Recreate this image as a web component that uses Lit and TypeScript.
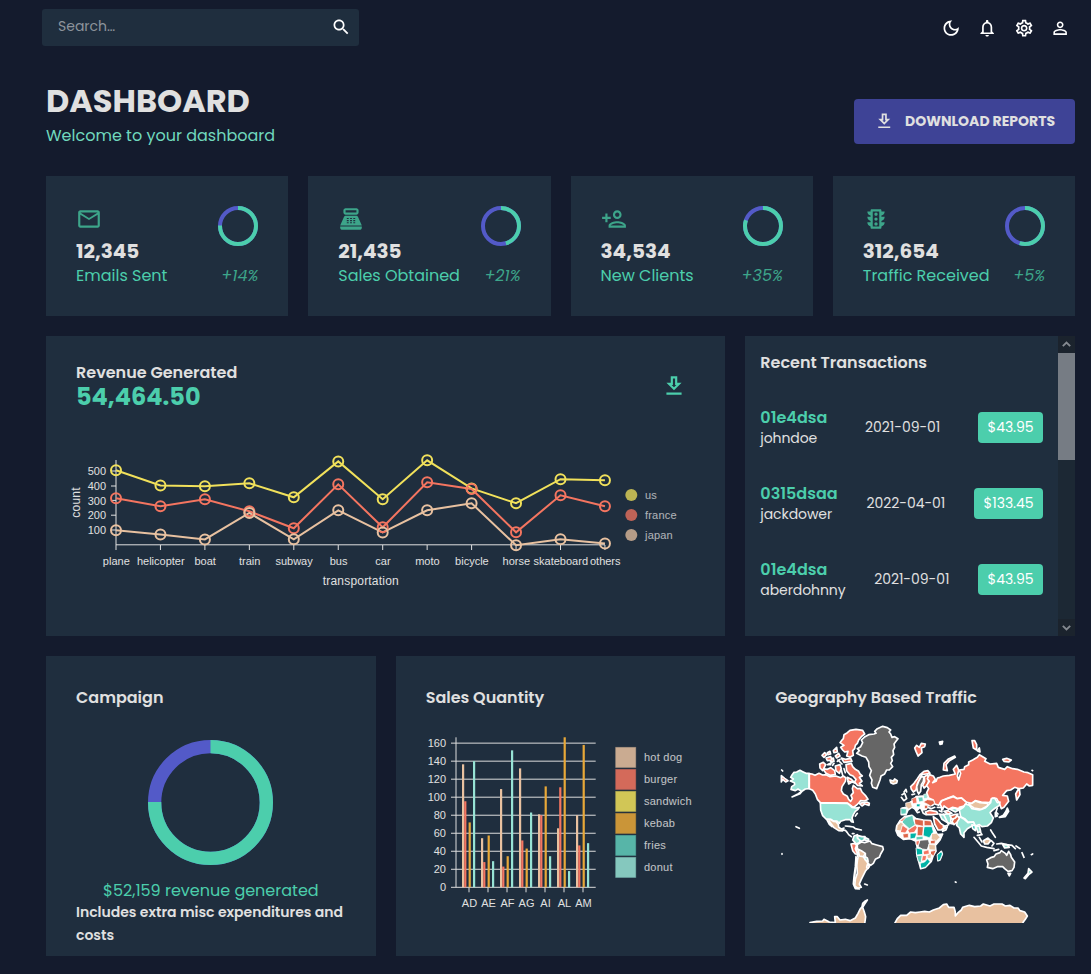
import { LitElement, html, svg, css } from "lit";
import { customElement, property } from "lit/decorators.js";

const ICONS: Record<string, string> = {
  search: "M15.5 14h-.79l-.28-.27C15.41 12.59 16 11.11 16 9.5 16 5.91 13.09 3 9.5 3S3 5.91 3 9.5 5.91 16 9.5 16c1.61 0 3.09-.59 4.23-1.57l.27.28v.79l5 4.99L20.49 19l-4.99-5zm-6 0C7.01 14 5 11.99 5 9.5S7.01 5 9.5 5 14 7.01 14 9.5 11.99 14 9.5 14z",
  moon: "M9.37 5.51c-.18.64-.27 1.31-.27 1.99 0 4.08 3.32 7.4 7.4 7.4.68 0 1.35-.09 1.99-.27C17.45 17.19 14.93 19 12 19c-3.86 0-7-3.14-7-7 0-2.93 1.81-5.45 4.37-6.49zM12 3c-4.97 0-9 4.03-9 9s4.03 9 9 9 9-4.03 9-9c0-.46-.04-.92-.1-1.36-.98 1.37-2.58 2.26-4.4 2.26-2.98 0-5.4-2.42-5.4-5.4 0-1.81.89-3.42 2.26-4.4-.44-.06-.9-.1-1.36-.1z",
  bell: "M12 22c1.1 0 2-.9 2-2h-4c0 1.1.9 2 2 2zm6-6v-5c0-3.07-1.63-5.64-4.5-6.32V4c0-.83-.67-1.5-1.5-1.5s-1.5.67-1.5 1.5v.68C7.64 5.36 6 7.92 6 11v5l-2 2v1h16v-1l-2-2zm-2 1H8v-6c0-2.48 1.51-4.5 4-4.5s4 2.02 4 4.5v6z",
  gear: "M19.43 12.98c.04-.32.07-.64.07-.98 0-.34-.03-.66-.07-.98l2.11-1.65c.19-.15.24-.42.12-.64l-2-3.46c-.09-.16-.26-.25-.44-.25-.06 0-.12.01-.17.03l-2.49 1c-.52-.4-1.08-.73-1.69-.98l-.38-2.65C14.46 2.18 14.25 2 14 2h-4c-.25 0-.46.18-.49.42l-.38 2.65c-.61.25-1.17.59-1.69.98l-2.49-1c-.06-.02-.12-.03-.18-.03-.17 0-.34.09-.43.25l-2 3.46c-.13.22-.07.49.12.64l2.11 1.65c-.04.32-.07.65-.07.98 0 .33.03.66.07.98l-2.11 1.65c-.19.15-.24.42-.12.64l2 3.46c.09.16.26.25.44.25.06 0 .12-.01.17-.03l2.49-1c.52.4 1.08.73 1.69.98l.38 2.65c.03.24.24.42.49.42h4c.25 0 .46-.18.49-.42l.38-2.65c.61-.25 1.17-.59 1.69-.98l2.49 1c.06.02.12.03.18.03.17 0 .34-.09.43-.25l2-3.46c.12-.22.07-.49-.12-.64l-2.11-1.65zm-1.98-1.71c.04.31.05.52.05.73 0 .21-.02.43-.05.73l-.14 1.13.89.7 1.08.84-.7 1.21-1.27-.51-1.04-.42-.9.68c-.43.32-.84.56-1.25.73l-1.06.43-.16 1.13-.2 1.35h-1.4l-.19-1.35-.16-1.13-1.06-.43c-.43-.18-.83-.41-1.23-.71l-.91-.7-1.06.43-1.27.51-.7-1.21 1.08-.84.89-.7-.14-1.13c-.03-.31-.05-.54-.05-.74s.02-.43.05-.73l.14-1.13-.89-.7-1.08-.84.7-1.21 1.27.51 1.04.42.9-.68c.43-.32.84-.56 1.25-.73l1.06-.43.16-1.13.2-1.35h1.39l.19 1.35.16 1.13 1.06.43c.43.18.83.41 1.23.71l.91.7 1.06-.43 1.27-.51.7 1.21-1.07.85-.89.7.14 1.13zM12 8c-2.21 0-4 1.79-4 4s1.79 4 4 4 4-1.79 4-4-1.79-4-4-4zm0 6c-1.1 0-2-.9-2-2s.9-2 2-2 2 .9 2 2-.9 2-2 2z",
  person: "M12 5.9c1.16 0 2.1.94 2.1 2.1s-.94 2.1-2.1 2.1S9.9 9.16 9.9 8s.94-2.1 2.1-2.1m0 9c2.97 0 6.1 1.46 6.1 2.1v1.1H5.9V17c0-.64 3.13-2.1 6.1-2.1M12 4C9.79 4 8 5.79 8 8s1.79 4 4 4 4-1.79 4-4-1.79-4-4-4zm0 9c-2.67 0-8 1.34-8 4v3h16v-3c0-2.66-5.33-4-8-4z",
  download: "M19 9h-4V3H9v6H5l7 7 7-7zm-8 2V5h2v6h1.17L12 13.17 9.83 11H11zm-6 7h14v2H5z",
  email: "M22 6c0-1.1-.9-2-2-2H4c-1.1 0-2 .9-2 2v12c0 1.1.9 2 2 2h16c1.1 0 2-.9 2-2V6zm-2 0-8 5-8-5h16zm0 12H4V8l8 5 8-5v10z",
  sale: "M17 2H7c-1.1 0-2 .9-2 2v2c0 1.1.9 2 2 2h10c1.1 0 2-.9 2-2V4c0-1.1-.9-2-2-2zm0 4H7V4h10v2zm3 16H4c-1.1 0-2-.9-2-2v-1h20v1c0 1.1-.9 2-2 2zm-1.47-11.81C18.21 9.47 17.49 9 16.7 9H7.3c-.79 0-1.51.47-1.83 1.19L2 18h20l-3.47-7.81zM9.5 16h-1c-.28 0-.5-.22-.5-.5s.22-.5.5-.5h1c.28 0 .5.22.5.5s-.22.5-.5.5zm0-2h-1c-.28 0-.5-.22-.5-.5s.22-.5.5-.5h1c.28 0 .5.22.5.5s-.22.5-.5.5zm0-2h-1c-.28 0-.5-.22-.5-.5s.22-.5.5-.5h1c.28 0 .5.22.5.5s-.22.5-.5.5zm3 4h-1c-.28 0-.5-.22-.5-.5s.22-.5.5-.5h1c.28 0 .5.22.5.5s-.22.5-.5.5zm0-2h-1c-.28 0-.5-.22-.5-.5s.22-.5.5-.5h1c.28 0 .5.22.5.5s-.22.5-.5.5zm0-2h-1c-.28 0-.5-.22-.5-.5s.22-.5.5-.5h1c.28 0 .5.22.5.5s-.22.5-.5.5zm3 4h-1c-.28 0-.5-.22-.5-.5s.22-.5.5-.5h1c.28 0 .5.22.5.5s-.22.5-.5.5zm0-2h-1c-.28 0-.5-.22-.5-.5s.22-.5.5-.5h1c.28 0 .5.22.5.5s-.22.5-.5.5zm0-2h-1c-.28 0-.5-.22-.5-.5s.22-.5.5-.5h1c.28 0 .5.22.5.5s-.22.5-.5.5z",
  addPerson: "M15 12c2.21 0 4-1.79 4-4s-1.79-4-4-4-4 1.79-4 4 1.79 4 4 4zm0-6c1.1 0 2 .9 2 2s-.9 2-2 2-2-.9-2-2 .9-2 2-2zm0 8c-2.67 0-8 1.34-8 4v2h16v-2c0-2.66-5.33-4-8-4zm-6 4c.22-.72 3.31-2 6-2 2.7 0 5.8 1.29 6 2H9zm-3-3v-3h3v-2H6V7H4v3H1v2h3v3z",
  traffic: "M20 10h-3V8.86c1.72-.45 3-2 3-3.86h-3V4c0-.55-.45-1-1-1H8c-.55 0-1 .45-1 1v1H4c0 1.86 1.28 3.41 3 3.86V10H4c0 1.86 1.28 3.41 3 3.86V15H4c0 1.86 1.28 3.41 3 3.86V20c0 .55.45 1 1 1h8c.55 0 1-.45 1-1v-1.14c1.72-.45 3-2 3-3.86h-3v-1.14c1.72-.45 3-2 3-3.86zm-5 9H9V5h6v14zm-3-1c.83 0 1.5-.67 1.5-1.5S12.83 15 12 15s-1.5.67-1.5 1.5.67 1.5 1.5 1.5zm0-4.5c.83 0 1.5-.67 1.5-1.5s-.67-1.5-1.5-1.5-1.5.67-1.5 1.5.67 1.5 1.5 1.5zm0-4.5c.83 0 1.5-.67 1.5-1.5S12.83 6 12 6s-1.5.67-1.5 1.5S11.17 9 12 9z",
};

const icon = (name: string, size: number) =>
  html`<svg width=${size} height=${size} viewBox="0 0 24 24" fill="currentColor"><path d=${ICONS[name]}></path></svg>`;

@customElement("progress-ring")
class ProgressRing extends LitElement {
  @property({ type: Number }) size = 40;
  @property({ type: Number }) progress = 0.75;
  @property({ type: Number }) thickness = 4;
  static styles = css`
    :host { display: block; }
    svg { display: block; }
  `;
  render() {
    const r = (this.size - this.thickness) / 2;
    const c = this.size / 2;
    const len = 2 * Math.PI * r;
    return html`<svg width=${this.size} height=${this.size} fill="none" stroke-width=${this.thickness}>
      <circle cx=${c} cy=${c} r=${r} stroke="#535ac8"></circle>
      <circle cx=${c} cy=${c} r=${r} stroke="#4cceac" stroke-dasharray="${len * this.progress} ${len}" transform="rotate(-90 ${c} ${c})"></circle>
    </svg>`;
  }
}

const MODES = ["plane", "helicopter", "boat", "train", "subway", "bus", "car", "moto", "bicycle", "horse", "skateboard", "others"];
const LINES = [
  { id: "us", color: "#f1e15b", ys: [470.3, 485.4, 486.3, 483.3, 497.3, 461.4, 499.2, 460.3, 488.4, 503.2, 479.2, 480.3] },
  { id: "france", color: "#f47560", ys: [498.3, 506.3, 499.2, 511.3, 528.3, 484.3, 527.3, 482.3, 489, 532.3, 495.3, 506.2] },
  { id: "japan", color: "#e8c1a0", ys: [530.3, 534.4, 539.4, 513, 539.3, 510.3, 532.4, 510.3, 503.3, 545.3, 539.2, 543.4] },
];

@customElement("line-chart")
class LineChart extends LitElement {
  static styles = css`
    :host { display: block; }
    svg { display: block; font-family: "Liberation Sans", Arial, sans-serif; font-size: 11px; }
    .title { font-size: 12px; letter-spacing: 0.2px; }
    .legend { letter-spacing: 0.2px; }
    .axis { stroke: #e0e0e0; stroke-width: 1; }
  `;
  render() {
    const x = (i: number) => 116 + i * 44.45;
    return html`<svg width="679" height="200" viewBox="46 436 679 200">
      <g class="axis">
        <line x1="116" x2="116" y1="460" y2="545"></line>
        <line x1="116" x2="605" y1="544.8" y2="544.8"></line>
        ${MODES.map((_, i) => svg`<line x1=${x(i)} x2=${x(i)} y1="545" y2="550"></line>`)}
        ${[471, 486, 500.4, 515.2, 530].map((y) => svg`<line x1="111" x2="116" y1=${y} y2=${y}></line>`)}
      </g>
      <g fill="#e0e0e0">
        ${MODES.map((m, i) => svg`<text x=${x(i) + 0.3} y="565" text-anchor="middle">${m}</text>`)}
        ${[500, 400, 300, 200, 100].map((v, i) => svg`<text x="106" y=${475 + i * 14.8} text-anchor="end">${v}</text>`)}
        <text class="title" x="360.8" y="585" text-anchor="middle">transportation</text>
        <text class="title" transform="translate(79.5 502.5) rotate(-90)" text-anchor="middle">count</text>
      </g>
      ${LINES.map((l) => svg`<polyline fill="none" stroke=${l.color} stroke-width="2" points=${l.ys.map((y, i) => `${x(i)},${y}`).join(" ")}></polyline>`)}
      ${LINES.map((l) => l.ys.map((y, i) => svg`<circle cx=${x(i)} cy=${y} r="5" fill="none" stroke=${l.color} stroke-width="2"></circle>`))}
      ${LINES.map((l, i) => svg`<g opacity="0.75"><circle cx="631.3" cy=${495 + i * 20} r="6" fill=${l.color}></circle><text class="legend" x="645" y=${499 + i * 20} fill="#e0e0e0">${l.id}</text></g>`)}
    </svg>`;
  }
}

const FOODS = [
  ["hot dog", "#e8c1a0"], ["burger", "#f47560"], ["sandwich", "#f1e15b"],
  ["kebab", "#e8a838"], ["fries", "#61cdbb"], ["donut", "#97e3d5"],
];
const SALES: [string, number[]][] = [
  ["AD", [136.5, 95.5, 0, 72, 0, 140]],
  ["AE", [54.5, 28, 0, 57.5, 0, 29]],
  ["AF", [109, 23, 0, 34.5, 0, 152]],
  ["AG", [132, 52, 0, 43, 0, 83]],
  ["AI", [81, 80, 0, 112, 0, 34.5]],
  ["AL", [65.5, 111, 0, 166.5, 0, 18]],
  ["AM", [80, 46.5, 0, 158, 0, 49]],
];

@customElement("bar-chart")
class BarChart extends LitElement {
  static styles = css`
    :host { display: block; }
    svg { display: block; font-family: "Liberation Sans", Arial, sans-serif; font-size: 11px; }
    .legend { letter-spacing: 0.25px; }
  `;
  render() {
    const y = (v: number) => 887.3 - v * 0.901;
    const ticks = [0, 20, 40, 60, 80, 100, 120, 140, 160];
    return html`<svg width="329" height="230" viewBox="396 726 329 230">
      <g stroke="#dddddd" stroke-width="1">
        ${ticks.map((t) => svg`<line x1="451" x2="595.7" y1=${y(t)} y2=${y(t)}></line>`)}
        <line x1="456" x2="456" y1="737.3" y2="887.3"></line>
        ${SALES.map((_, i) => svg`<line x1=${469 + i * 19} x2=${469 + i * 19} y1="887.3" y2="892.3"></line>`)}
      </g>
      ${SALES.map(([, vs], g) => vs.map((v, i) => v ? svg`<rect x=${462 + g * 19 + i * 2.2} y=${y(v)} width="2.2" height=${v * 0.901} fill=${FOODS[i][1]}></rect>` : null))}
      <g fill="#e0e0e0">
        ${ticks.map((t) => svg`<text x="446" y=${y(t) + 4} text-anchor="end">${t}</text>`)}
        ${SALES.map(([n], i) => svg`<text x=${469.5 + i * 19} y="907" text-anchor="middle">${n}</text>`)}
      </g>
      ${FOODS.map(([n, c], i) => svg`<g opacity="0.85"><rect x="615.7" y=${747.4 + i * 22} width="20" height="20" fill=${c} stroke=${c} stroke-opacity="0.5" stroke-width="1"></rect><text class="legend" x="644" y=${761 + i * 22} fill="#e0e0e0">${n}</text></g>`)}
    </svg>`;
  }
}

const CORAL = "#f47560", MINT = "#97e3d5", SAND = "#e8c1a0", GREY = "#666666", JADE = "#61cdbb", TEAL = "#00b3a6", RUST = "#dd6549";

/* Left half of the map: the Americas and Greenland. */
const WEST: [string, string][] = [
  [MINT, "M117 160L108 160 98 155 90 151 80 156 72 157 66 165 62 172 70 177 61 183 73 188 74 194 65 200 63 208 76 212 84 207 95 214 82 223 66 231 90 221 97 213 106 207 117 206Z"],
  [CORAL, "M34 167L44 175 54 182 47 186 38 178 34 186Z"],
  [CORAL, "M118 161L126 162 135 166 147 160 158 165 168 164 180 170 198 168 212 173 220 168 228 174 226 184 216 200 214 212 220 222 232 229 236 238 242 244 247 236 243 226 250 218 247 206 250 196 262 206 271 205 276 216 286 226 294 238 284 243 272 242 266 249 260 255 250 263 242 256 232 249 151 248 142 238 136 222 128 211 118 206Z"],
  [CORAL, "M268 250L280 248 290 246 298 250 297 256 284 252 276 258Z"],
  [MINT, "M151 249L232 250 240 256 246 262 258 264 268 262 264 268 256 274 250 284 246 294 250 307 244 305 240 299 226 299 212 304 208 310 200 303 190 303 182 298 168 297 158 287 152 270Z"],
  [SAND, "M170 298L182 299 190 304 198 305 205 313 206 322 214 327 222 324 218 333 206 332 192 323 184 312 178 304 180 312 186 320 178 313Z"],
  [GREY, "M285 50L296 44 312 42 318 40 314 34 322 26 338 19 352 23 362 30 357 36 362 42 366 52 374 50 384 56 378 64 372 72 374 82 369 92 371 104 364 112 367 122 362 130 368 140 358 150 350 150 344 162 333 168 330 180 326 190 320 206 308 202 304 190 306 180 299 166 304 152 297 140 296 126 288 112 276 108 260 100 268 92 262 86 272 80 278 68 274 60Z"],
  [CORAL, "M220 56L222 44 232 38 240 31 258 28 278 31 284 42 274 50 266 60 262 70 256 76 254 86 248 92 250 106 240 112 230 108 234 94 224 96 218 90 212 82 222 76 210 68 216 60Z"],
  [CORAL, "M214 114L226 118 242 115 246 124 222 127Z"],
  [CORAL, "M228 134L244 130 248 140 256 148 266 154 270 162 277 168 268 172 276 184 268 190 277 198 262 196 254 186 258 178 249 168 240 164 230 152Z"],
  [CORAL, "M232 172L244 178 256 190 246 186 236 192Z"],
  [CORAL, "M158 146L172 148 182 143 194 152 196 164 180 166 168 160Z"],
  [CORAL, "M149 132L160 127 167 134 158 152 150 144Z"],
  [CORAL, "M196 138L210 134 214 146 208 160 198 152Z"],
  [CORAL, "M180 118L190 114 192 124 182 126Z"],
  [CORAL, "M156 106L164 98 170 104 162 112Z"],
  [CORAL, "M172 98L180 94 182 102 174 104Z"],
  [CORAL, "M190 92L200 82 202 96 192 98Z"],
  [CORAL, "M168 114L182 110 186 120 172 122Z"],
  [CORAL, "M196 108L206 100 210 108 200 114Z"],
  [SAND, "M360 180L370 183 374 177 382 182 380 189 370 192 362 188Z"],
  [SAND, "M262 372L258 390 264 412 260 432 262 460 256 478 254 498 264 505 274 502 268 492 274 478 280 466 286 454 292 446 298 438 292 428 284 416 276 404Z"],
  [MINT, "M258 410L262 424 256 450 254 474 251 490 256 502 268 507 256 506 250 492 252 470 256 440Z"],
  [MINT, "M252 348L262 344 262 354 272 360 268 368 258 372 252 364 248 360Z"],
  [JADE, "M262 346L276 350 285 350 282 360 274 364 264 356Z"],
  [MINT, "M284 352L296 358 294 364 284 360Z"],
  [CORAL, "M243 372L254 370 260 376 256 386 260 396 268 402 256 402 248 392Z"],
  [SAND, "M264 388L276 392 286 400 280 410 268 408Z"],
  [GREY, "M262 374L274 366 284 368 300 363 306 371 320 375 338 380 340 388 332 402 328 412 316 418 310 430 302 436 294 430 292 416 286 410 286 400 274 392 262 386Z"],
  [JADE, "M282 410L292 414 294 424 286 420Z"],
  [CORAL, "M292 434L298 440 294 446 290 442Z"],
  [SAND, "M120 608L140 604 158 603 162 598 178 606 196 608 194 590 202 590 210 600 226 598 240 602 256 594 264 580 270 568 276 560 278 550 286 543 292 540 284 552 278 562 283 576 287 590 284 612 120 612Z"],
];

/* Right half: Eurasia, Oceania, East Antarctica and the coasts under Africa and Europe. */
const EAST: [string, string][] = [
  ["#ffffff", "M20 318L30 302 44 290 66 286 78 296 100 300 122 302 130 320 142 344 158 342 150 360 136 376 138 394 130 406 124 424 106 442 92 446 86 424 80 400 82 384 78 364 62 356 40 358 24 346 18 332Z"],
  ["#ffffff", "M36 264L50 262 62 246 72 240 78 230 98 228 120 236 134 246 128 256 112 258 108 268 98 270 90 262 80 272 70 258 54 270 48 284 34 284Z"],
  [CORAL, "M64 208L62 200 72 190 82 176 90 164 102 154 114 152 120 160 108 162 96 164 90 176 82 192 78 210 70 216Z"],
  [GREY, "M82 214L80 200 86 184 94 170 102 171 100 184 94 194 93 204 92 214 86 222Z"],
  [RUST, "M103 170L113 164 116 180 114 194 102 204 98 196 104 184Z"],
  [CORAL, "M118 164L130 168 136 178 128 188 138 184 142 174 150 172 160 168 178 166 196 162 190 148 200 136 206 150 202 168 206 180 212 160 208 150 222 148 224 140 236 134 236 126 248 120 262 112 268 104 288 116 284 124 300 132 320 130 325 142 344 148 352 140 368 146 382 148 402 156 414 158 428 164 428 196 418 198 410 192 400 204 388 206 390 224 380 240 377 222 386 206 374 202 362 210 350 212 338 226 352 228 356 244 342 262 334 266 328 250 320 236 308 234 298 248 274 246 256 242 244 250 228 246 214 234 202 236 190 228 174 234 154 242 146 256 134 252 130 240 116 234 110 218 116 206 110 196 118 184 112 176Z"],
  [CORAL, "M150 252L156 242 172 236 190 230 202 236 214 234 230 248 222 262 204 266 188 262 176 268 162 258 158 268Z"],
  [MINT, "M208 270L220 262 226 252 238 256 246 266 268 270 286 264 302 248 304 236 314 234 322 248 330 246 328 256 316 264 306 272 300 278 310 294 304 308 292 318 276 320 268 314 256 318 250 306 234 306 224 296 212 290Z"],
  [SAND, "M234 252L246 250 256 243 270 248 294 250 292 258 274 268 252 264Z"],
  [MINT, "M202 304L210 290 220 296 234 308 250 306 254 314 242 320 232 326 222 338 222 352 212 342 208 324 200 316Z"],
  [RUST, "M186 304L192 294 204 288 208 296 200 308 192 314Z"],
  [MINT, "M148 282L160 284 176 280 184 290 182 304 188 312 172 308 156 298Z"],
  [RUST, "M180 288L192 284 204 282 196 294 186 298Z"],
  [RUST, "M130 290L142 298 152 310 166 320 154 330 144 330 134 312Z"],
  [CORAL, "M162 274L174 272 186 280 174 282Z"],
  [MINT, "M180 268L194 264 206 270 196 276Z"],
  [CORAL, "M106 276L120 271 140 275 144 282 126 284 110 284Z"],
  [SAND, "M160 326L172 320 168 330 158 334Z"],
  [TEAL, "M246 314L256 318 256 332 248 326Z"],
  [MINT, "M258 320L268 318 272 334 264 338Z"],
  [CORAL, "M74 84L80 76 88 82 94 70 106 72 104 80 94 84 96 98 84 108 78 94Z"],
  [CORAL, "M160 150L162 130 174 118 194 108 196 112 178 122 168 134 172 152Z"],
  [CORAL, "M246 62L254 62 260 74 260 90 250 84Z"],
  [CORAL, "M262 92L268 84 270 96Z"],
  [CORAL, "M338 118L350 115 364 120 356 126 342 124Z"],
  ["#ffffff", "M148 66L158 64 156 72 150 73Z"],
  ["#ffffff", "M352 264L356 274 346 290 328 292 340 286 348 274Z"],
  [SAND, "M280 362L294 354 302 362 294 372 284 372Z"],
  [MINT, "M338 374L352 374 358 382 344 384Z"],
  [JADE, "M316 278L322 288 316 290Z"],
  [GREY, "M290 420L302 413 312 410 318 402 330 398 334 392 346 400 350 406 356 394 362 404 364 412 374 426 372 442 366 452 354 454 344 446 338 440 322 440 308 446 292 442 294 432Z"],
  [MINT, "M354 460L362 460 358 468Z"],
  [MINT, "M416 446L426 456 416 464 406 476 402 474 414 460Z"],
  [SAND, "M12 614L22 596 32 586 50 586 62 576 76 578 90 576 104 574 118 576 130 570 148 564 160 554 170 552 176 562 192 562 196 576 196 588 204 578 214 570 218 562 238 556 254 560 272 558 280 552 300 558 312 552 336 552 346 558 360 556 372 564 384 564 390 572 404 576 412 588 406 598 400 606 396 614Z"],
];

/* Small countries of Europe and Africa, laid over the white coasts. */
const INNER: [string, string][] = [
  [RUST, "M100 246L112 239 130 241 134 250 122 258 110 251Z"],
  [JADE, "M84 232L98 231 100 243 88 246Z"],
  [CORAL, "M66 236L79 231 81 249 69 251Z"],
  [SAND, "M48 249L63 246 67 261 56 267 48 260Z"],
  [JADE, "M33 265L50 267 48 281 34 283Z"],
  [MINT, "M102 223L110 221 113 234 102 236Z"],
  [RUST, "M104 256L113 256 113 265 104 266Z"],
  [TEAL, "M80 252L91 252 89 260 80 260Z"],
  [JADE, "M38 296L50 292 68 286 71 302 76 314 58 326 38 308Z"],
  [CORAL, "M29 303L46 290 46 294 38 303Z"],
  [SAND, "M20 330L22 316 32 307 40 311 38 333Z"],
  [CORAL, "M38 316L54 327 46 339 32 337Z"],
  [CORAL, "M54 330L76 316 82 323 73 337 58 339Z"],
  [RUST, "M74 297L100 301 100 319 76 314Z"],
  [RUST, "M83 320L100 320 98 347 82 347Z"],
  [RUST, "M103 301L123 303 126 317 103 317Z"],
  [TEAL, "M103 320L126 320 130 336 118 353 100 347Z"],
  [SAND, "M126 341L140 340 150 352 137 365 124 358Z"],
  [TEAL, "M61 340L80 339 76 354 61 357Z"],
  [RUST, "M39 342L55 340 55 353 41 354Z"],
  [JADE, "M79 350L99 349 99 358 79 360Z"],
  [CORAL, "M79 363L89 362 87 377 79 374Z"],
  [GREY, "M91 361L115 359 118 372 111 389 97 387 85 380Z"],
  [SAND, "M117 373L136 375 136 390 118 389Z"],
  [RUST, "M122 362L136 360 135 371 122 371Z"],
  [TEAL, "M79 384L97 388 98 403 81 405Z"],
  [CORAL, "M100 394L116 389 118 402 102 404Z"],
  [JADE, "M81 407L97 406 93 429 86 425Z"],
  [CORAL, "M98 407L110 407 107 421 96 423Z"],
  [SAND, "M112 405L124 400 123 415 113 415Z"],
  [RUST, "M122 394L138 391 131 408 123 403Z"],
  [TEAL, "M91 430L104 426 113 416 120 425 107 441 94 445Z"],
  [TEAL, "M142 404L154 395 157 402 150 420 144 422Z"],
];

const WEST_COAST = "M78 320L88 325M36 401v2M35 150l3 3M216 330L226 331 232 338 236 344 244 350M226 318L238 319 250 321 256 326 274 330M247 341h5M234 184L246 186M284 492L292 495M262 280L256 288M214 150L218 166M204 120L216 132M186 128L176 132M210 118L202 124M222 146L226 158M172 134L182 134M192 130L188 136";
const EAST_COAST = "M42 216L48 208 50 216M36 224L44 220 50 236 42 242M34 232L40 240M66 262L74 266 82 278 88 276M92 262L100 280 108 284M142 262L154 262 156 276 148 272M66 224L74 222M112 262L124 266 134 262M252 352L264 366 274 378 290 382 312 386M302 330L308 340 316 352M304 362L312 370 306 378M320 372L334 370 350 374 366 376 376 386M378 378L390 386M396 398L402 412M424 404L428 402M270 334L276 344 262 346M196 486l2 1M426 151l2 1M312 392L326 388M268 352L276 366M322 264L318 276 324 282M160 282L176 314 160 320M208 262L222 258M144 404L154 394 157 402 150 420 144 422Z";

@customElement("world-map")
class WorldMap extends LitElement {
  static styles = css`
    :host { display: block; }
    svg { display: block; margin-left: 24.67px; }
  `;
  render() {
    const land = (list: [string, string][]) => list.map(([f, d]) => svg`<path fill=${f} d=${d}></path>`);
    return html`<svg width="270" height="202.67" viewBox="0 0 810 608" stroke="#fff" stroke-width="5" stroke-linejoin="round" stroke-linecap="round">
      <g>${land(WEST)}<path fill="none" d=${WEST_COAST}></path></g>
      <g transform="translate(360 0)">${land(EAST)}<path fill="none" d=${EAST_COAST}></path><g stroke-width="2.2">${land(INNER)}</g></g>
    </svg>`;
  }
}

const STATS = [
  { icon: "email", value: "12,345", label: "Emails Sent", pct: "+14%", p: 0.75 },
  { icon: "sale", value: "21,435", label: "Sales Obtained", pct: "+21%", p: 0.453 },
  { icon: "addPerson", value: "34,534", label: "New Clients", pct: "+35%", p: 0.797 },
  { icon: "traffic", value: "312,654", label: "Traffic Received", pct: "+5%", p: 0.545 },
];
const TX = [
  { id: "01e4dsa", user: "johndoe", date: "2021-09-01", cost: "$43.95" },
  { id: "0315dsaa", user: "jackdower", date: "2022-04-01", cost: "$133.45" },
  { id: "01e4dsa", user: "aberdohnny", date: "2021-09-01", cost: "$43.95" },
];

@customElement("app-root")
class AppRoot extends LitElement {
  static styles = css`
    :host {
      display: block; box-sizing: border-box; height: 974px; overflow: hidden;
      background: #141b2d; color: #e0e0e0;
      font-family: Poppins, Inter, sans-serif; font-size: 14px; white-space: nowrap;
    }
    * { box-sizing: border-box; }
    svg { display: block; }
    .topbar { display: flex; justify-content: space-between; padding: 9px 20.5px 0 42px; height: 46px; }
    .search { display: flex; justify-content: space-between; align-items: center; width: 317px; height: 37px; padding: 0 8px 0 16px; border-radius: 3px; background: #1f2e3e; color: #fff; }
    .placeholder { color: #8d949c; line-height: 20px; margin-top: -3px; }
    .actions { display: flex; gap: 16.1px; color: #fff; padding-top: 8.6px; }
    .header { display: flex; justify-content: space-between; height: 130px; padding: 0 16px 0 46px; }
    .heading { padding-top: 38px; }
    .title { font-size: 32px; font-weight: 700; line-height: 34px; }
    .subtitle { font-size: 16px; line-height: 24px; margin-top: 6px; color: #70d8bd; }
    .button { display: flex; align-items: center; gap: 10.5px; width: 221px; height: 45px; margin-top: 53px; padding-left: 20px; border-radius: 4px; background: #3e4396; font-weight: 700; line-height: 20px; }
    .button span { margin-top: -1px; }
    .grid { display: grid; grid-template-columns: repeat(12, 1fr); grid-auto-rows: 140px; gap: 20px; padding: 0 16px 0 46px; }
    .card { background: #1f2e3e; min-width: 0; overflow: hidden; }
    .stat { grid-column: span 3; padding: 30px; }
    .row { display: flex; justify-content: space-between; }
    .green-icon { color: #3da58a; }
    .value { font-size: 20px; font-weight: 700; line-height: 20px; margin-top: 9px; }
    .labels { line-height: 24px; font-size: 16px; color: #4cceac; margin-top: 2.5px; }
    .pct { font-style: italic; color: #3da58a; }
    .revenue { grid-column: span 8; grid-row: span 2; }
    .rev-head { height: 100px; padding: 25px 38px 0 30px; }
    .h5 { font-size: 16px; font-weight: 600; line-height: 24px; }
    .total { font-size: 24px; font-weight: 700; line-height: 24px; color: #4cceac; }
    .rev-icon { color: #4cceac; padding-top: 12px; }
    .tx { grid-column: span 4; grid-row: span 2; display: flex; }
    .tx-body { flex: 1; padding: 0 15px; }
    .tx-title { padding: 15px 0 14px; }
    .tx-row { display: flex; justify-content: space-between; align-items: center; height: 76px; letter-spacing: -0.05px; }
    .tx-id { font-size: 16px; font-weight: 600; line-height: 21px; color: #4cceac; letter-spacing: 0; }
    .tx-user { line-height: 20px; letter-spacing: -0.08px; }
    .chip { background: #4cceac; color: #fff; height: 31px; line-height: 31px; padding: 0 9.5px; border-radius: 4px; }
    .scrollbar { display: flex; flex-direction: column; width: 17px; background: #1c2834; }
    .arrow { display: grid; place-items: center; height: 17px; background: #1b232d; }
    .arrow.up { padding-bottom: 2px; }
    .thumb { height: 107px; background: #767c84; }
    .track { flex: 1; }
    .third { grid-column: span 4; grid-row: span 2; }
    .third-title { padding: 30px 30px 0; }
    .campaign-ring { display: flex; justify-content: center; padding-top: 30px; }
    .campaign-text { text-align: center; font-size: 16px; line-height: 24px; color: #4cceac; margin-top: 14px; }
    .note { padding: 0 30px; font-weight: 600; line-height: 23px; margin-top: -2px; white-space: normal; }
    .bars { margin-top: 16px; }
    .map { margin-top: 10px; }
  `;
  render() {
    return html`
      <div class="topbar">
        <div class="search"><span class="placeholder">Search…</span>${icon("search", 20.3)}</div>
        <div class="actions">${["moon", "bell", "gear", "person"].map((n) => icon(n, 20.3))}</div>
      </div>
      <div class="header">
        <div class="heading">
          <div class="title">DASHBOARD</div>
          <div class="subtitle">Welcome to your dashboard</div>
        </div>
        <div class="button">${icon("download", 20.5)}<span>DOWNLOAD REPORTS</span></div>
      </div>
      <div class="grid">
        ${STATS.map((s) => html`<div class="card stat">
          <div class="row">
            <div><div class="green-icon">${icon(s.icon, 26)}</div><div class="value">${s.value}</div></div>
            <progress-ring progress=${s.p}></progress-ring>
          </div>
          <div class="row labels"><span>${s.label}</span><span class="pct">${s.pct}</span></div>
        </div>`)}
        <div class="card revenue">
          <div class="row rev-head">
            <div><div class="h5">Revenue Generated</div><div class="total">54,464.50</div></div>
            <div class="rev-icon">${icon("download", 26)}</div>
          </div>
          <line-chart></line-chart>
        </div>
        <div class="card tx">
          <div class="tx-body">
            <div class="h5 tx-title">Recent Transactions</div>
            ${TX.map((t) => html`<div class="tx-row">
              <div><div class="tx-id">${t.id}</div><div class="tx-user">${t.user}</div></div>
              <span>${t.date}</span>
              <div class="chip">${t.cost}</div>
            </div>`)}
          </div>
          <div class="scrollbar">
            <div class="arrow up"><svg width="9" height="6" fill="none" stroke="#858a91" stroke-width="1.8"><path d="M.8 5.2L4.5 1.5 8.2 5.2"></path></svg></div>
            <div class="thumb"></div><div class="track"></div>
            <div class="arrow"><svg width="9" height="6" fill="none" stroke="#858a91" stroke-width="1.8"><path d="M.8.8L4.5 4.5 8.2.8"></path></svg></div>
          </div>
        </div>
        <div class="card third">
          <div class="h5 third-title">Campaign</div>
          <div class="campaign-ring"><progress-ring size="125" thickness="13.3" progress="0.75"></progress-ring></div>
          <div class="campaign-text">$52,159 revenue generated</div>
          <div class="note">Includes extra misc expenditures and costs</div>
        </div>
        <div class="card third">
          <div class="h5 third-title">Sales Quantity</div>
          <bar-chart class="bars"></bar-chart>
        </div>
        <div class="card third">
          <div class="h5 third-title">Geography Based Traffic</div>
          <world-map class="map"></world-map>
        </div>
      </div>
    `;
  }
}
